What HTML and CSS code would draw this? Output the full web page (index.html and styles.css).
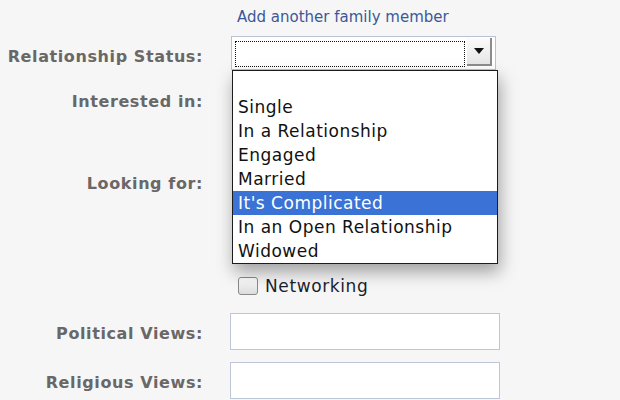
FILE: index.html
```html
<!DOCTYPE html>
<html lang="en">
<head>
    <meta charset="UTF-8">
    <title>Relationship Info</title>
    <link rel="stylesheet" href="styles.css">
</head>
<body>
    <form class="profile-form">
        <div class="row row-link">
            <span class="label"></span>
            <a href="#" class="add-link">Add another family member</a>
        </div>

        <div class="row row-status">
            <label class="label">Relationship Status:</label>
            <div class="field select-wrap">
                <div class="fake-select">
                    <span class="focus-ring"></span>
                    <span class="arrow-btn"><span class="arrow"></span></span>
                </div>
                <ul class="dropdown">
                    <li></li>
                    <li>Single</li>
                    <li>In a Relationship</li>
                    <li>Engaged</li>
                    <li>Married</li>
                    <li class="selected">It's Complicated</li>
                    <li>In an Open Relationship</li>
                    <li>Widowed</li>
                </ul>
            </div>
        </div>

        <div class="row row-interested">
            <label class="label">Interested in:</label>
            <!-- options sit under the open dropdown -->
            <div class="field options covered-two"></div>
        </div>

        <div class="row row-looking">
            <label class="label">Looking for:</label>
            <div class="field options covered-three">
                <div class="option"><span class="check"></span>Networking</div>
            </div>
        </div>

        <div class="row row-political">
            <label class="label">Political Views:</label>
            <input type="text" class="field text-input">
        </div>

        <div class="row row-religious">
            <label class="label">Religious Views:</label>
            <input type="text" class="field text-input">
        </div>
    </form>
</body>
</html>
```

FILE: styles.css
```css
body {
    margin: 0;
    background-color: #f6f6f6;
    font-family: "DejaVu Sans", Verdana, sans-serif;
    overflow: hidden;
}

.profile-form {
    display: flex;
    flex-direction: column;
}

.row {
    display: flex;
    align-items: flex-start;
}

.label {
    width: 203px;
    flex-shrink: 0;
    text-align: right;
    font-size: 16px;
    font-weight: bold;
    letter-spacing: 0.6px;
    color: #6a6767;
    line-height: 18px;
}

.field {
    margin-left: 27px;
}

/* link row */
.row-link {
    padding-top: 8px;
    height: 20px;
}

.add-link {
    margin-left: 34px;
    font-size: 15px;
    color: #3b5998;
    text-decoration: none;
}

/* relationship select */
.row-status {
    margin-top: 8px;
}

.row-status .label {
    padding-top: 12px;
}

.select-wrap {
    position: relative;
    margin-left: 28px;
}

.fake-select {
    width: 263px;
    height: 32px;
    border: 1px solid #b8c2d3;
    background: #fff;
    position: relative;
}

.focus-ring {
    position: absolute;
    left: 3px;
    top: 4px;
    width: 228px;
    height: 24px;
    border: 1px dotted #111;
}

.arrow-btn {
    position: absolute;
    right: 3px;
    top: 1px;
    width: 25px;
    height: 28px;
    background: linear-gradient(#fbfbfb, #e6e6e6);
    border-right: 2px solid #8c8c8c;
    border-bottom: 2px solid #8c8c8c;
    box-sizing: border-box;
    display: flex;
    align-items: center;
    justify-content: center;
}

.arrow {
    width: 0;
    height: 0;
    border-left: 5px solid transparent;
    border-right: 5px solid transparent;
    border-top: 6px solid #111;
}

.dropdown {
    position: absolute;
    top: 34px;
    left: 1px;
    width: 264px;
    margin: 0;
    padding: 0;
    list-style: none;
    background: #fff;
    border: 1px solid #1c1c1c;
    box-shadow: 2px 8px 16px rgba(0, 0, 0, 0.35);
    z-index: 5;
}

.dropdown li {
    height: 24px;
    line-height: 24px;
    padding-left: 5px;
    font-size: 17px;
    letter-spacing: 0.5px;
    color: #111;
}

.dropdown li.selected {
    background-color: #3a73d5;
    color: white;
}

/* checkbox groups */
.row-interested {
    margin-top: 15px;
}

.row-looking {
    margin-top: 14px;
}

.row-interested .label,
.row-looking .label {
    padding-top: 8px;
}

.options {
    display: flex;
    flex-direction: column;
    margin-left: 35px;
}

.covered-two {
    height: 68px;
}

.covered-three {
    padding-top: 102px;
}

.option {
    height: 34px;
    display: flex;
    align-items: center;
    font-size: 17px;
    letter-spacing: 0.6px;
    color: #1c1f2e;
}

.check {
    width: 18px;
    height: 16px;
    border: 1px solid #8a8a8a;
    border-radius: 3px;
    background: linear-gradient(#ffffff, #dcdcdc);
    margin-right: 7px;
}

/* text inputs */
.row-political {
    margin-top: 10px;
}

.row-religious {
    margin-top: 12px;
}

.row-political .label,
.row-religious .label {
    padding-top: 12px;
}

.text-input {
    width: 270px;
    height: 37px;
    box-sizing: border-box;
    border: 1px solid #bdc7d8;
    background: #fff;
}
```
